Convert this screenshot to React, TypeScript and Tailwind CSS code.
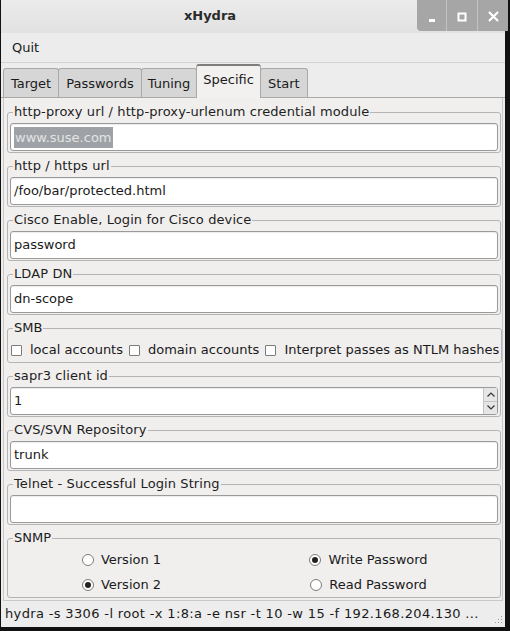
import React from 'react';

const font = "font-['DejaVu_Sans',sans-serif]";

const Group: React.FC<{ label: string; children: React.ReactNode; className?: string }> = ({ label, children, className }) => (
  <fieldset className={`border border-[#b4b4b4] rounded-[3px] px-[2px] pt-[4px] pb-[1px] ${className ?? ''}`}>
    <legend className="ml-[3px] px-[1px] leading-[14px] text-[13px] text-[#1e1e1e] tracking-[0.1px]">{label}</legend>
    {children}
  </fieldset>
);

const TextBox: React.FC<{ value?: string; selected?: boolean; spin?: boolean }> = ({ value, selected, spin }) => (
  <div className="h-[28px] w-full bg-white border border-[#9a9a9a] rounded-[3px] flex items-center pl-[2px] shadow-[inset_0_1px_1px_rgba(0,0,0,0.08)]">
    {selected ? (
      <span className="bg-[#9ea2a7] text-[#e4e4e4] text-[13px] leading-[21px] px-[1px] ml-[1px]">{value}</span>
    ) : (
      <span className="text-[13px] text-[#1a1a1a] ml-[1px]">{value}</span>
    )}
    {spin && (
      <div className="ml-auto h-full w-[14px] flex flex-col border-l border-[#c4c4c4] bg-[#e6e6e6]">
        <div className="flex-1 flex items-center justify-center border-b border-[#c4c4c4]">
          <svg width="8" height="5" viewBox="0 0 8 5"><path d="M0.5 4.5 L4 1 L7.5 4.5" fill="none" stroke="#333" strokeWidth="1.2" /></svg>
        </div>
        <div className="flex-1 flex items-center justify-center">
          <svg width="8" height="5" viewBox="0 0 8 5"><path d="M0.5 0.5 L4 4 L7.5 0.5" fill="none" stroke="#333" strokeWidth="1.2" /></svg>
        </div>
      </div>
    )}
  </div>
);

const Check: React.FC<{ label: string }> = ({ label }) => (
  <div className="flex items-center shrink-0">
    <span className="w-[11px] h-[11px] bg-white border border-[#7c7c7c] rounded-[1px] shrink-0" />
    <span className="ml-[8px] text-[13px] text-[#1a1a1a] whitespace-nowrap">{label}</span>
  </div>
);

const Radio: React.FC<{ label: string; checked?: boolean }> = ({ label, checked }) => (
  <div className="flex items-center">
    <span className="w-[12px] h-[12px] rounded-full bg-white border border-[#7c7c7c] flex items-center justify-center">
      {checked && <span className="w-[6px] h-[6px] rounded-full bg-[#222]" />}
    </span>
    <span className="ml-[7px] text-[13px] text-[#1a1a1a]">{label}</span>
  </div>
);

const tabs = ['Target', 'Passwords', 'Tuning', 'Specific', 'Start'];

export default function App() {
  return (
    <div className={`w-[510px] h-[631px] bg-[#121212] ${font}`}>
      <div className="ml-[1px] w-[504px] h-[627px] bg-[#ededed] flex flex-col text-[#1a1a1a]">
        {/* title bar */}
        <div className="h-[33px] flex bg-gradient-to-b from-[#ebebeb] to-[#e2e2e2]">
          <div className="flex-1 flex items-center justify-center pb-[1px] pl-[2px]">
            <span className="font-bold text-[13px] text-[#2a2a2a]">xHydra</span>
          </div>
          <div className="w-[91px] h-[31px] mr-[-3px] bg-[#a6a6a6] rounded-bl-[4px] flex">
            <div className="w-[30px] flex items-center justify-center border-r border-[#c2c2c2]">
              <svg width="8" height="4" viewBox="0 0 8 4" className="mt-[10px]"><rect x="1" y="0" width="6" height="3" fill="#fff" /></svg>
            </div>
            <div className="w-[31px] flex items-center justify-center border-r border-[#c2c2c2]">
              <svg width="10" height="10" viewBox="0 0 10 10" className="mt-[2px]"><rect x="1.5" y="1.5" width="7" height="7" fill="none" stroke="#fff" strokeWidth="2" /></svg>
            </div>
            <div className="flex-1 flex items-center justify-center">
              <svg width="11" height="11" viewBox="0 0 11 11" className="mt-[2px]"><path d="M1 1 L10 10 M10 1 L1 10" stroke="#fff" strokeWidth="2.2" /></svg>
            </div>
          </div>
        </div>

        {/* menu bar */}
        <div className="h-[30px] flex items-center pl-[11px] border-b border-[#d2d2d2] bg-[#ececec]">
          <span className="text-[13px]">Quit</span>
        </div>

        {/* tabs */}
        <div className="h-[35px] flex items-end pl-[2px] border-b border-[#a9a9a9]">
          {tabs.map((t) =>
            t === 'Specific' ? (
              <div
                key={t}
                className="relative z-10 h-[34px] mb-[-1px] px-[6px] flex items-center pb-[4px] bg-[#f2f1f0] border border-b-0 border-[#a9a9a9] border-t-2 border-t-[#7d7d7d] rounded-t-[3px] text-[13px] -mr-px"
              >
                {t}
              </div>
            ) : (
              <div
                key={t}
                className={`h-[29px] ${t === 'Tuning' ? 'px-[6px]' : 'px-[7px]'} flex items-center pt-[2px] bg-[#d6d6d6] border border-b-0 border-[#a9a9a9] rounded-t-[3px] text-[13px] -mr-px`}
              >
                {t}
              </div>
            )
          )}
        </div>

        {/* panel */}
        <div className="flex-1 mx-[2px] bg-[#f0efee] border-x border-b border-[#c8c8c8] pl-[3px] pr-[1px] pt-[7px] flex flex-col gap-[6px]">
          <Group label="http-proxy url / http-proxy-urlenum credential module">
            <TextBox value="www.suse.com" selected />
          </Group>
          <Group label="http / https url">
            <TextBox value="/foo/bar/protected.html" />
          </Group>
          <Group label="Cisco Enable, Login for Cisco device">
            <TextBox value="password" />
          </Group>
          <Group label="LDAP DN">
            <TextBox value="dn-scope" />
          </Group>
          <fieldset className="border border-[#b4b4b4] rounded-[3px] px-[2px] pt-[6px] pb-[3px]">
            <legend className="ml-[3px] px-[1px] leading-[14px] text-[13px]">SMB</legend>
            <div className="h-[18px] flex items-center gap-[6px] pl-[1px] overflow-hidden">
              <Check label="local accounts" />
              <Check label="domain accounts" />
              <Check label="Interpret passes as NTLM hashes" />
            </div>
          </fieldset>
          <Group label="sapr3 client id">
            <TextBox value="1" spin />
          </Group>
          <Group label="CVS/SVN Repository">
            <TextBox value="trunk" />
          </Group>
          <Group label="Telnet - Successful Login String">
            <TextBox value="" />
          </Group>
          <fieldset className="border border-[#b4b4b4] rounded-[3px] pt-[3px] pb-0">
            <legend className="ml-[5px] px-[1px] leading-[14px] text-[13px]">SNMP</legend>
            <div className="grid grid-cols-[241px_253px] ml-[-7px] justify-items-center">
              <div className="h-[24px] flex items-center"><Radio label="Version 1" /></div>
              <div className="h-[24px] flex items-center"><Radio label="Write Password" checked /></div>
              <div className="h-[25px] flex items-center"><Radio label="Version 2" checked /></div>
              <div className="h-[25px] flex items-center"><Radio label="Read Password" /></div>
            </div>
          </fieldset>
        </div>

        {/* status bar */}
        <div className="h-[26px] flex items-center pl-[4px] pr-[2px] relative">
          <span className="text-[13px] text-[#1a1a1a] whitespace-nowrap tracking-[0.35px]">hydra -s 3306 -l root -x 1:8:a -e nsr -t 10 -w 15 -f 192.168.204.130 ...</span>
          <svg width="10" height="10" viewBox="0 0 10 10" className="absolute right-[2px] bottom-[2px]">
            {[[8, 0], [8, 3], [5, 3], [8, 6], [5, 6], [2, 6]].map(([x, y], i) => (
              <rect key={i} x={x} y={y + 1} width="1" height="1" fill="#9a9a9a" />
            ))}
          </svg>
        </div>
      </div>
    </div>
  );
}
